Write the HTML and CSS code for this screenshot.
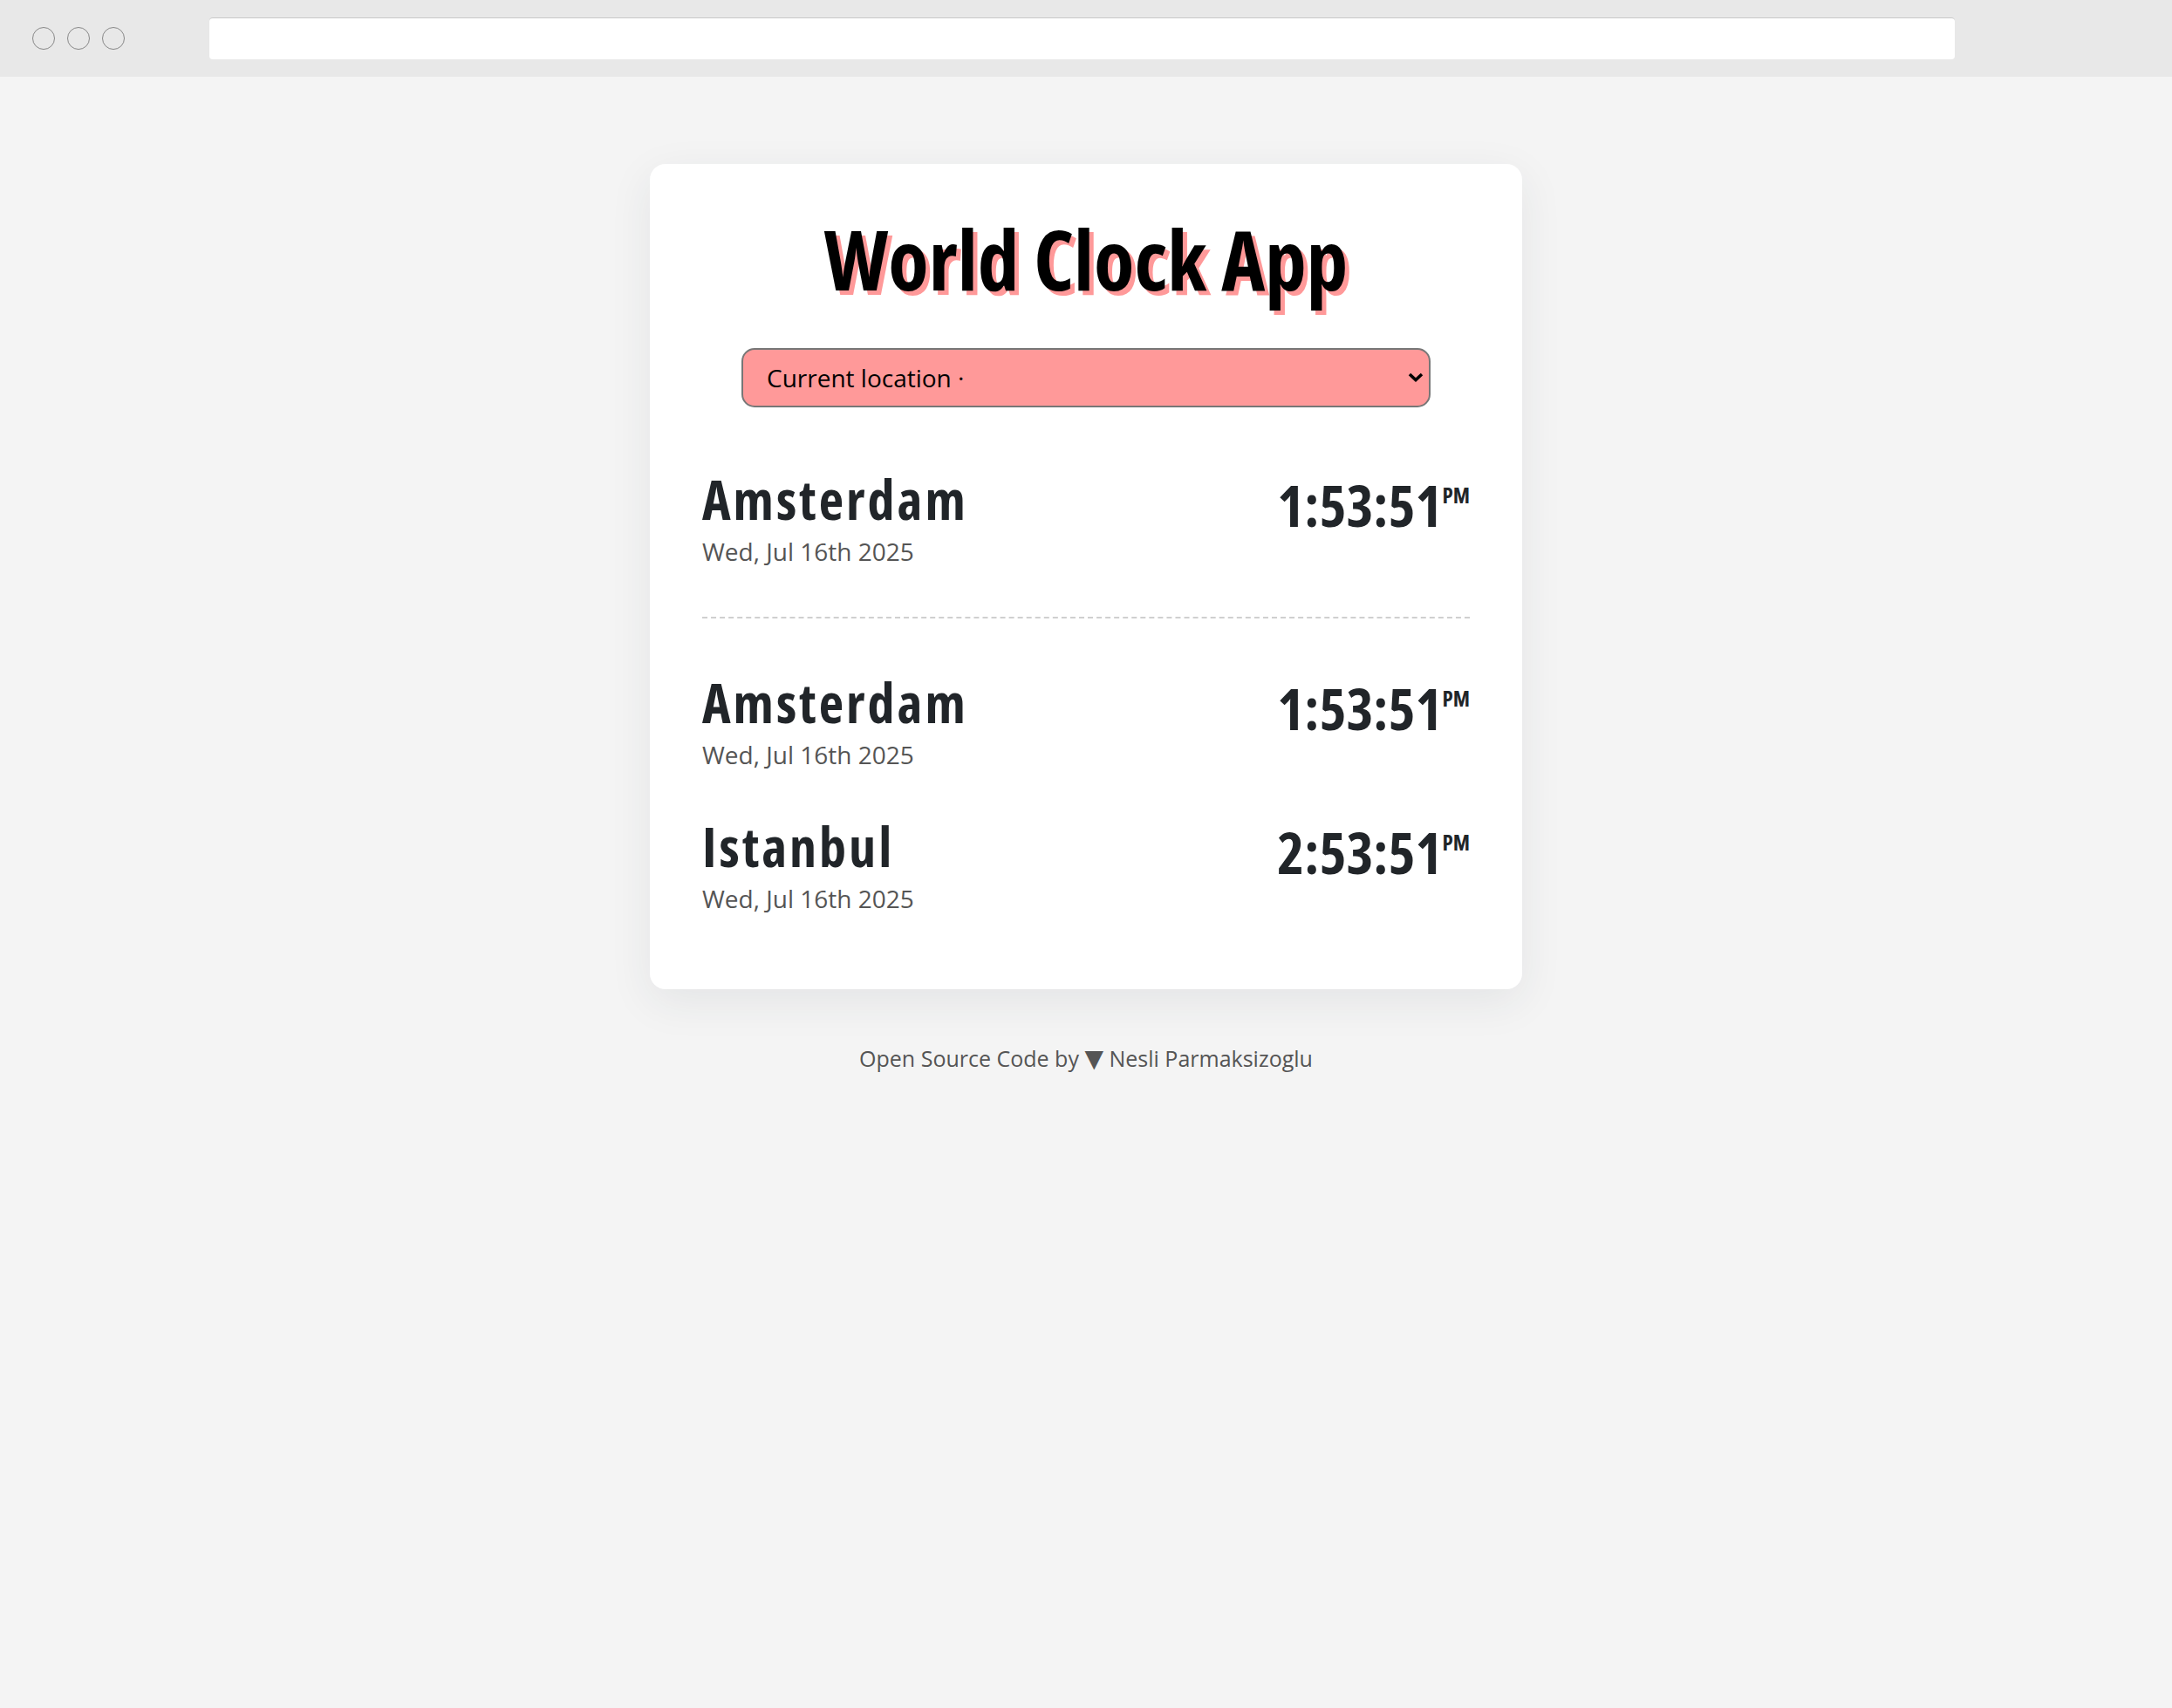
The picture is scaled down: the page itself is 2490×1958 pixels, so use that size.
FILE: index.html
```html
<!DOCTYPE html>
<html lang="en">
<head>
    <meta charset="UTF-8">
    <meta name="viewport" content="width=device-width, initial-scale=1.0">
    <title>World Clock App</title>
    <link rel="stylesheet" href="styles.css">
</head>
<body>
    <div class="browser-bar">
        <div class="dots">
            <span class="dot"></span>
            <span class="dot"></span>
            <span class="dot"></span>
        </div>
        <div class="address"></div>
    </div>

    <main class="page">
        <div class="container">
            <h1>World Clock App</h1>

            <div class="select-wrap">
                <select class="city-select" id="citySelect">
                    <option value="current">Current location ·</option>
                    <option value="Europe/Amsterdam">Amsterdam</option>
                    <option value="Europe/Istanbul">Istanbul</option>
                </select>
                <svg class="chevron" viewBox="0 0 18 11" width="18" height="11">
                    <path d="M2 2 L9 8.5 L16 2" fill="none" stroke="#000" stroke-width="3.6"/>
                </svg>
            </div>

            <div class="city current-city">
                <div class="city-info">
                    <div class="city-name">Amsterdam</div>
                    <div class="city-date">Wed, Jul 16th 2025</div>
                </div>
                <div class="city-time">1:53:51<span class="ampm">PM</span></div>
            </div>

            <div class="cities">
                <div class="city">
                    <div class="city-info">
                        <div class="city-name">Amsterdam</div>
                        <div class="city-date">Wed, Jul 16th 2025</div>
                    </div>
                    <div class="city-time">1:53:51<span class="ampm">PM</span></div>
                </div>
                <div class="city">
                    <div class="city-info">
                        <div class="city-name">Istanbul</div>
                        <div class="city-date">Wed, Jul 16th 2025</div>
                    </div>
                    <div class="city-time">2:53:51<span class="ampm">PM</span></div>
                </div>
            </div>
        </div>

        <p class="footer">Open Source Code by <span class="tri">▼</span> Nesli Parmaksizoglu</p>
    </main>
</body>
</html>
```

FILE: styles.css
```css
* {
    margin: 0;
    padding: 0;
    box-sizing: border-box;
}

body {
    background: #f4f4f4;
    font-family: "Open Sans", "DejaVu Sans Condensed", sans-serif;
    color: #212529;
}

/* fake browser chrome */
.browser-bar {
    height: 88px;
    background: #e8e8e8;
    display: flex;
    align-items: center;
    padding: 0 37px;
}

.dots {
    display: flex;
    gap: 14px;
    width: 203px;
}

.dot {
    width: 26px;
    height: 26px;
    border: 1.5px solid #888;
    border-radius: 50%;
}

.address {
    width: 2001px;
    height: 48px;
    background: white;
    border-top: 1px solid #c8c8c8;
    border-radius: 4px;
}

.page {
    display: flex;
    flex-direction: column;
    align-items: center;
    padding-top: 100px;
}

.container {
    background: white;
    width: 1000px;
    border-radius: 18px;
    box-shadow: 0 14px 50px rgba(40, 45, 70, 0.08);
    padding: 61px 60px 61px;
    display: flex;
    flex-direction: column;
    align-items: center;
}

h1 {
    font-stretch: 75%;
    font-size: 95px;
    line-height: 1;
    font-weight: 700;
    color: #000;
    text-shadow: 5px 5px 0 #ff9999;
}

.select-wrap {
    position: relative;
    margin-top: 55px;
    width: 790px;
}

.city-select {
    appearance: none;
    display: block;
    width: 100%;
    height: 68px;
    padding: 0 27px;
    font-family: inherit;
    font-size: 28px;
    color: #000;
    background-color: #ff9999;
    border: 2px solid #777;
    border-radius: 15px;
}

.chevron {
    position: absolute;
    right: 8px;
    top: 28px;
    pointer-events: none;
}

.city {
    width: 100%;
    display: flex;
    justify-content: space-between;
    align-items: flex-start;
    padding: 32px 0 25px;
}

.current-city {
    margin-top: 42px;
    padding-bottom: 57px;
    border-bottom: 2px dashed #d0d0d0;
}

.cities {
    width: 100%;
    margin-top: 33px;
}

.city-name {
    font-stretch: 75%;
    font-size: 62px;
    letter-spacing: 3px;
    line-height: 1;
    font-weight: 700;
}

.city-date {
    margin-top: 13px;
    font-size: 28px;
    line-height: 1.2;
    color: #555;
}

.city-time {
    font-stretch: 75%;
    margin-top: 4px;
    font-size: 66px;
    line-height: 1;
    font-weight: 700;
}

.ampm {
    display: inline-block;
    vertical-align: top;
    margin-top: 10px;
    font-size: 25px;
    line-height: 1;
}

.footer {
    margin-top: 63px;
    font-size: 25px;
    line-height: 1.2;
    color: #555;
}

.tri {
    font-family: "DejaVu Sans", sans-serif;
    font-size: 28px;
}
```
